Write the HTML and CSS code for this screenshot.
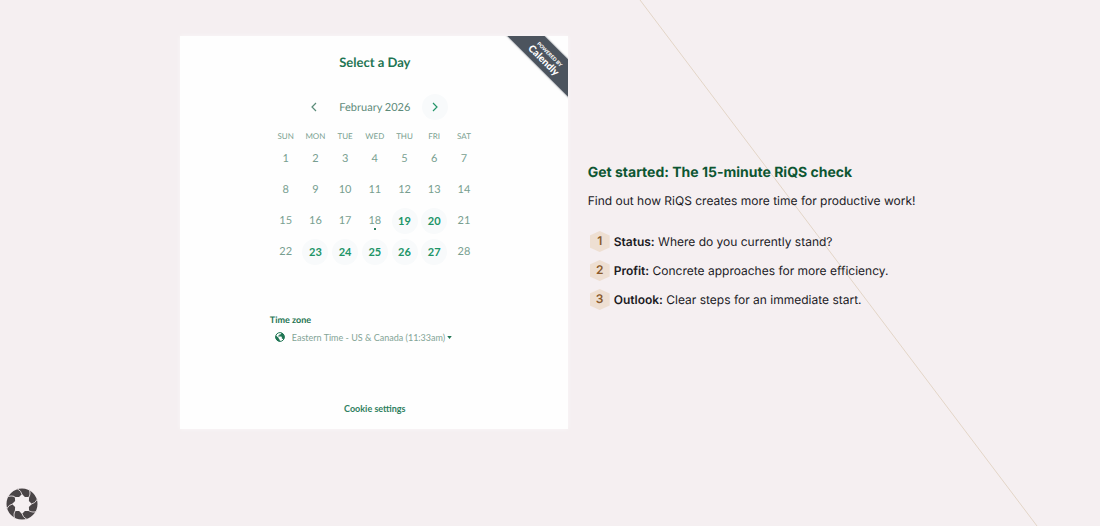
FILE: index.html
```
<!DOCTYPE html>
<html lang="en">

<head>
    <meta charset="UTF-8">
    <meta name="viewport" content="width=device-width, initial-scale=1.0">
    <title>RiQS check</title>
    <link rel="stylesheet" href="styles.css">
</head>

<body>
    <svg class="bg-line" viewBox="0 0 1100 526" preserveAspectRatio="none" aria-hidden="true">
        <path d="M640 0L1037 526" />
    </svg>

    <main class="container">
        <section class="booking">
            <div class="ribbon"><a href="#"><small>POWERED BY</small>Calendly</a></div>
            <h2 class="booking-title">Select a Day</h2>

            <div class="month">
                <button type="button" class="month-btn" aria-label="Previous month">
                    <svg viewBox="0 0 8 10"><path d="M6 1L2 5l4 4" /></svg>
                </button>
                <span class="month-name">February 2026</span>
                <button type="button" class="month-btn next" aria-label="Next month">
                    <svg viewBox="0 0 8 10"><path d="M2 1l4 4-4 4" /></svg>
                </button>
            </div>

            <table class="calendar">
                <thead>
                    <tr><th>SUN</th><th>MON</th><th>TUE</th><th>WED</th><th>THU</th><th>FRI</th><th>SAT</th></tr>
                </thead>
                <tbody>
                    <tr><td>1</td><td>2</td><td>3</td><td>4</td><td>5</td><td>6</td><td>7</td></tr>
                    <tr><td>8</td><td>9</td><td>10</td><td>11</td><td>12</td><td>13</td><td>14</td></tr>
                    <tr>
                        <td>15</td><td>16</td><td>17</td><td class="today">18</td>
                        <td><button type="button" class="day">19</button></td>
                        <td><button type="button" class="day">20</button></td>
                        <td>21</td>
                    </tr>
                    <tr>
                        <td>22</td>
                        <td><button type="button" class="day">23</button></td>
                        <td><button type="button" class="day">24</button></td>
                        <td><button type="button" class="day">25</button></td>
                        <td><button type="button" class="day">26</button></td>
                        <td><button type="button" class="day">27</button></td>
                        <td>28</td>
                    </tr>
                </tbody>
            </table>

            <div class="timezone">
                <label for="tz">Time zone</label>
                <div class="tz-row">
                    <svg class="globe" viewBox="0 0 10 10" aria-hidden="true">
                        <circle cx="5" cy="5" r="4.4" />
                        <path d="M1 3.4L3.8 6v1l1 .8v1.6C2.200 9.300.6 7.300.6 5zM6.200.8v.9l-.9.8h-1v1H3.200v1h3l.6.6v1.300l1.200.5.6.8C10 5.500 9.600 2 6.200.8z" />
                    </svg>
                    <select id="tz">
                        <option>Eastern Time - US &amp; Canada (11:33am)</option>
                    </select>
                    <svg class="caret" viewBox="0 0 6 4" aria-hidden="true"><path d="M0 0h6L3 4z" /></svg>
                </div>
            </div>

            <button type="button" class="cookie-link">Cookie settings</button>
        </section>

        <section class="intro">
            <h1>Get started: The 15-minute RiQS check</h1>
            <p>Find out how RiQS creates more time for productive work!</p>
            <ol class="steps">
                <li><span class="num">1</span><span><b>Status:</b> Where do you currently stand?</span></li>
                <li><span class="num">2</span><span><b>Profit:</b> Concrete approaches for more efficiency.</span></li>
                <li><span class="num">3</span><span><b>Outlook:</b> Clear steps for an immediate start.</span></li>
            </ol>
        </section>
    </main>

    <button type="button" class="consent" aria-label="Privacy settings">
        <svg viewBox="0 0 32 32">
            <defs>
                <path id="slit" d="M16 6.500Q15.500 3 11 .5" />
            </defs>
            <path fill-rule="evenodd" d="M16 .5A15.500 15.500 0 0 1 16 31.500A15.500 15.500 0 0 1 16 .5zM16 6L18.900 9.100L23.100 8.900L22.900 13.100L26 16L22.900 18.900L23.100 23.100L18.900 22.900L16 26L13.100 22.900L8.900 23.100L9.100 18.900L6 16L9.100 13.100L8.900 8.900L13.100 9.100z" />
            <g class="slits">
                <use href="#slit" />
                <use href="#slit" transform="rotate(45 16 16)" />
                <use href="#slit" transform="rotate(90 16 16)" />
                <use href="#slit" transform="rotate(135 16 16)" />
                <use href="#slit" transform="rotate(180 16 16)" />
                <use href="#slit" transform="rotate(225 16 16)" />
                <use href="#slit" transform="rotate(270 16 16)" />
                <use href="#slit" transform="rotate(315 16 16)" />
            </g>
        </svg>
    </button>
</body>

</html>
```
FILE: styles.css
```
* {
    box-sizing: border-box;
}

body {
    margin: 0;
    min-height: 100vh;
    background-color: #f5eff1;
    font-family: 'Inter', sans-serif;
    font-size: 12px;
    color: #1b1a1f;
    text-rendering: geometricPrecision;
}

button,
select {
    padding: 0;
    border: 0;
    background: none;
    font-family: inherit;
    cursor: pointer;
}

/* diagonal line behind the content */
.bg-line {
    position: absolute;
    top: 0;
    left: 0;
    width: 100%;
    height: 100%;
    z-index: -1;
}

.bg-line path {
    fill: none;
    stroke: #e3d5c7;
    stroke-width: 1;
}

.container {
    display: grid;
    grid-template-columns: 7fr 6fr;
    gap: 20px;
    align-items: center;
    max-width: 740px;
    margin: 0 auto;
    padding-top: 36px;
}

/* calendar card */
.booking {
    position: relative;
    display: flex;
    flex-direction: column;
    align-items: center;
    padding: 16px 0 12px 2px;
    background-color: #fefefe;
    box-shadow: 0 0 5px rgba(255, 255, 255, 0.5);
    font-family: 'Lato', sans-serif;
    color: #789e90;
}

.booking-title {
    margin: 0 0 22px;
    font-size: 13px;
    line-height: 20px;
    color: #1f7553;
}

.ribbon {
    position: absolute;
    top: 0;
    right: 0;
    width: 64px;
    height: 64px;
    overflow: hidden;
}

.ribbon a {
    position: absolute;
    top: 8px;
    right: -34px;
    width: 110px;
    padding: 7px 0 2px;
    background-color: #4c545e;
    box-shadow: 0 0 2px #4c545e;
    color: #fff;
    font-size: 10px;
    font-weight: 900;
    line-height: 11px;
    text-align: center;
    text-decoration: none;
    transform: rotate(45deg);
}

.ribbon small {
    display: block;
    font-size: 5px;
    line-height: 6px;
}

.month {
    display: flex;
    align-items: center;
    justify-content: center;
    gap: 12px;
    margin-bottom: 9px;
}

.month-btn {
    display: flex;
    align-items: center;
    justify-content: center;
    width: 26px;
    height: 26px;
    border-radius: 50%;
}

.month-btn.next {
    background-color: #f8fafb;
}

.month-btn svg {
    width: 8px;
    height: 10px;
    fill: none;
    stroke: #5b8c79;
    stroke-width: 1.2;
}

.month-btn.next svg {
    stroke: #249569;
}

.month-name {
    font-size: 11px;
    color: #5d8a79;
}

.calendar {
    width: 208px;
    table-layout: fixed;
    border-collapse: collapse;
    text-align: center;
}

.calendar th {
    height: 14px;
    padding: 0;
    font-size: 8px;
    font-weight: normal;
    line-height: 14px;
}

.calendar td {
    height: 31px;
    padding: 0;
    font-size: 11px;
}

.day {
    width: 26px;
    height: 26px;
    border-radius: 50%;
    background-color: #f8fafb;
    color: #209467;
    font-size: 11px;
    font-weight: bold;
}

.today {
    position: relative;
}

.today::after {
    content: "";
    position: absolute;
    bottom: 6px;
    left: calc(50% - 1px);
    width: 2px;
    height: 2px;
    background-color: #2e7d5e;
}

.timezone {
    width: 210px;
    margin-top: 46px;
}

.timezone label {
    display: block;
    font-size: 9px;
    font-weight: bold;
    line-height: 14px;
    color: #1f7553;
}

.tz-row {
    display: flex;
    align-items: center;
    gap: 7px;
    height: 20px;
    padding-left: 5px;
}

.globe {
    width: 10px;
    height: 10px;
    fill: #1f7553;
}

.globe circle {
    fill: none;
    stroke: #1f7553;
    stroke-width: 1;
}

.tz-row select {
    appearance: none;
    font-size: 9px;
    color: #83a496;
}

.caret {
    width: 5px;
    height: 3px;
    margin-left: -6px;
    fill: #1f7553;
}

.cookie-link {
    margin-top: 54px;
    color: #2f8060;
    font-size: 9px;
    font-weight: bold;
    line-height: 16px;
}

/* right column */
.intro {
    padding-top: 8px;
    white-space: nowrap;
}

.intro h1 {
    margin: 0 0 9px;
    color: #0d5632;
    font-size: 14px;
    font-weight: 700;
    line-height: 20px;
}

.intro p {
    margin: 0 0 21px;
    line-height: 18px;
}

.steps {
    display: grid;
    gap: 8px;
    margin: 0;
    padding: 0;
    list-style: none;
}

.steps li {
    display: flex;
    align-items: center;
    gap: 4px;
    padding-left: 2px;
}

.steps b {
    font-weight: 600;
}

.num {
    width: 20px;
    height: 21px;
    background-color: #eedfd2;
    clip-path: polygon(50% 0, 100% 22%, 100% 78%, 50% 100%, 0 78%, 0 22%);
    color: #8a5a2b;
    font-size: 12px;
    font-weight: 600;
    line-height: 20px;
    text-align: center;
}

.consent {
    position: fixed;
    left: 6px;
    bottom: 6px;
    width: 32px;
    height: 32px;
}

.consent svg {
    display: block;
    fill: #4a4547;
}

.slits {
    fill: none;
    stroke: #d8d1d3;
    stroke-width: 1;
}
```
